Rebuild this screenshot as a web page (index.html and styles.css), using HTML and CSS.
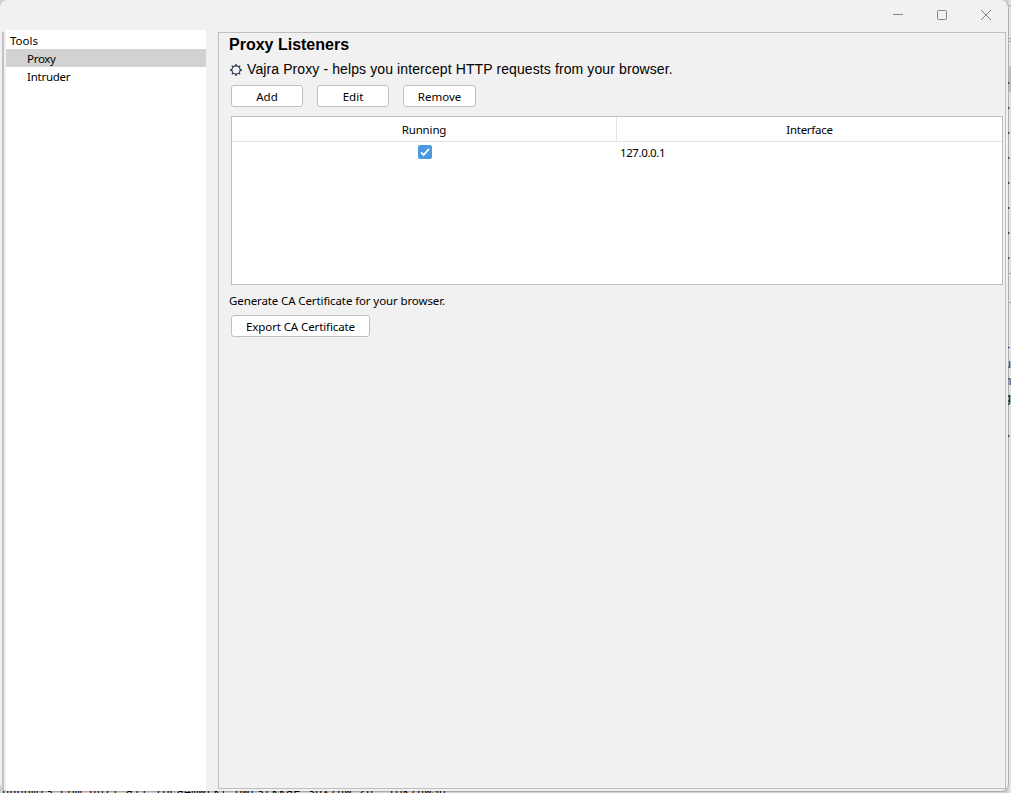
FILE: index.html
```html
<!DOCTYPE html>
<html lang="en">
<head>
<meta charset="utf-8">
<title>Vajra Proxy Settings</title>
<link rel="stylesheet" href="styles.css">
</head>
<body>
<div class="desktop">
  <div class="backdrop" aria-hidden="true">
    <i class="edge e1"></i><i class="edge e2"></i><i class="edge e3"></i><i class="row-selected"></i><i class="edge e4"></i><i class="edge e5"></i>
  </div>
  <div class="window">
    <header class="titlebar">
      <svg class="controls" width="110" height="30" viewBox="0 0 110 30" fill="none" stroke="#858585">
        <path d="M6 14.5h10"/>
        <rect x="50.5" y="10.5" width="9" height="9" rx="1"/>
        <path d="M94 10l10 10M104 10l-10 10"/>
      </svg>
    </header>
    <div class="content">
      <nav class="sidebar">
        <div class="item root">Tools</div>
        <div class="item child selected"><span class="t-proxy">Proxy</span></div>
        <div class="item child"><span class="t-intruder">Intruder</span></div>
      </nav>
      <main class="panel">
        <h1 class="heading">Proxy Listeners</h1>
        <p class="intro">
          <svg class="gear" width="14" height="14" viewBox="0 0 14 14" fill="none" stroke="#263448">
            <circle cx="7" cy="7" r="4.1" stroke-width="1.1"/>
            <path d="M7 1v2M7 11v2M1 7h2M11 7h2M2.8 2.8l1.3 1.3M9.9 9.9l1.3 1.3M11.2 2.8L9.9 4.1M4.1 9.9l-1.3 1.3" stroke-width="1.3"/>
          </svg>
          <span class="t-intro">Vajra Proxy - helps you intercept HTTP requests from your browser.</span>
        </p>
        <div class="buttons">
          <button class="btn">Add</button>
          <button class="btn">Edit</button>
          <button class="btn remove">Remove</button>
        </div>
        <div class="table">
          <div class="table-head"><div class="th"><span class="t-running">Running</span></div><div class="th"><span class="t-interface">Interface</span></div></div>
          <div class="table-row">
            <div class="td check">
              <svg width="14" height="14" viewBox="0 0 14 14"><rect width="14" height="14" rx="2" fill="#4a98e2"/><path d="M3 7.3l2.6 2.7L11 3.8" fill="none" stroke="#fff" stroke-width="1.8"/></svg>
            </div>
            <div class="td"><span class="t-ip">127.0.0.1</span></div>
          </div>
        </div>
        <p class="note"><span class="t-note">Generate CA Certificate for your browser.</span></p>
        <button class="btn export"><span class="t-note">Export CA Certificate</span></button>
      </main>
    </div>
  </div>
  <div class="fragments" aria-hidden="true">
    <i class="dot d1"></i><i class="dot d2"></i><i class="dot d3"></i><i class="dot d4"></i><i class="dot d5"></i><i class="dot d6"></i><i class="dot d7"></i><i class="dot d8"></i><i class="dot d9"></i>
    <span class="behind b1">-</span><span class="behind b2">u</span><span class="behind b3">m</span><span class="behind b4">g</span>
  </div>
  <div class="strip" aria-hidden="true"><span class="behind-line">nunqm7s.com qn71 a11 7oca4mwtkf owtsfkkaF.snx7uw 2n. Tok7nw3n</span></div>
</div>
</body>
</html>
```
FILE: styles.css
```css
* { box-sizing: border-box; }
body { margin: 0; overflow: hidden; }
.desktop {
  position: relative;
  width: 1011px;
  height: 793px;
  overflow: hidden;
  background: #d6d6d6;
  font: 11.5px/18px "Noto Sans", "Open Sans", sans-serif;
  color: #000;
}
.backdrop { position: absolute; inset: 0; background: linear-gradient(90deg, #d0d0d0 1008px, #e2e2e2 1009px); }
.edge { position: absolute; left: 1008px; width: 3px; height: 1px; background: #aaa; }
.e1 { top: 5px; } .e2 { top: 38px; } .e3 { top: 41px; } .e4 { top: 273px; } .e5 { top: 302px; }
.row-selected { position: absolute; left: 1008px; top: 66px; width: 3px; height: 26px; background: #bdbdbd; }
.fragments { position: absolute; left: 1008px; top: 0; width: 3px; height: 793px; overflow: hidden; }
.dot { position: absolute; left: 0; width: 2px; height: 2px; background: linear-gradient(90deg, #513654 50%, #61bde5 50%); }
.d1 { top: 82px; } .d2 { top: 107px; } .d3 { top: 132px; } .d4 { top: 157px; } .d5 { top: 182px; } .d6 { top: 207px; } .d7 { top: 232px; } .d8 { top: 257px; } .d9 { top: 435px; }
.behind { position: absolute; left: -4px; font: 12px/14px "Liberation Mono", monospace; }
.b1 { top: 341px; color: #000080; } .b2 { top: 358px; color: #18386e; } .b3 { top: 375px; color: #5b310d; } .b4 { top: 392px; }
.strip { position: absolute; left: 2px; top: 791px; width: 480px; height: 2px; overflow: hidden; }
.behind-line { position: absolute; left: 0; top: -6px; font: 12px/14px "Liberation Mono", monospace; letter-spacing: 0.08px; white-space: pre; }

.window {
  position: relative;
  width: 1009px;
  height: 792px;
  display: flex;
  flex-direction: column;
  background: #f1f1f1;
  border-right: 1px solid #b1b1b1;
  border-bottom: 1px solid #aaa;
  border-radius: 8px;
  overflow: hidden;
}
.titlebar { flex: none; height: 30px; display: flex; justify-content: flex-end; padding-right: 11px; }
.controls { display: block; }
.content { flex: 1; min-height: 0; display: flex; padding-left: 2px; background: linear-gradient(#c1c1c1, #c1c1c1) 2px 2px / 2px 100% no-repeat; }
.sidebar { width: 200px; margin-left: 4px; padding-top: 1px; background: #fff; }
.item { height: 18px; line-height: 20px; padding-left: 4px; white-space: nowrap; }
.child { padding-left: 21px; }
.selected { background: #d2d2d2; }
.panel { width: 788px; height: 757px; margin: 2px 0 0 12px; border: 1px solid #bfbfbf; padding: 1px 2px 0 12px; }
.heading { margin: 0 0 0 -2px; font: bold 16px/22px "Liberation Sans", Arial, sans-serif; white-space: nowrap; }
.intro { display: flex; align-items: center; gap: 4px; height: 22px; margin: 3px 0 0 -2px; font: 14px/20px "Liberation Sans", Arial, sans-serif; white-space: nowrap; }
.gear { flex: none; }
.t-intro { letter-spacing: 0.104px; padding-bottom: 2px; }
.t-proxy { letter-spacing: -0.3px; }
.t-intruder { letter-spacing: -0.25px; }
.t-running { letter-spacing: -0.15px; }
.t-interface { letter-spacing: -0.28px; }
.t-ip { letter-spacing: -0.4px; }
.t-note { letter-spacing: -0.11px; }
.buttons { display: flex; gap: 14px; margin-top: 4px; }
.btn { display: flex; align-items: center; justify-content: center; width: 72px; height: 22px; padding: 2px 0 0; border: 1px solid #bfbfbf; border-radius: 3px; background: #fff; color: #000; font: inherit; white-space: nowrap; }
.remove { width: 73px; }
.table { height: 169px; margin-top: 9px; border: 1px solid #bfbfbf; background: #fff; }
.table-head { display: grid; grid-template-columns: 384px 1fr; height: 25px; border-bottom: 1px solid #e3e3e3; }
.th { display: flex; justify-content: center; padding-top: 4px; }
.th + .th { border-left: 1px solid #e3e3e3; }
.table-row { display: grid; grid-template-columns: 384px 1fr; height: 24px; }
.td { padding: 2px 0 0 4px; }
.check { display: flex; justify-content: center; padding: 3px 0 0 2px; }
.note { margin: 7px 0 0 -2px; height: 18px; white-space: nowrap; }
.export { width: 139px; margin-top: 5px; }
```
